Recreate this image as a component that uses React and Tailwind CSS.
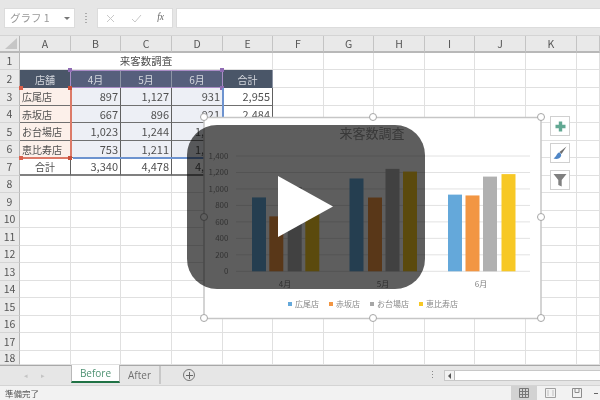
import React from "react";

const FONT = "font-['Noto_Sans_CJK_JP','Noto_Sans',sans-serif]";
const cols = ["A","B","C","D","E","F","G","H","I","J","K",""];
const rowNums = Array.from({ length: 18 }, (_, i) => i + 1);

const data = {
  3: ["広尾店", "897", "1,127", "931", "2,955"],
  4: ["赤坂店", "667", "896", "921", "2,484"],
  5: ["お台場店", "1,023", "1,244", "1,", ""],
  6: ["恵比寿店", "753", "1,211", "1,", ""],
  7: ["合計", "3,340", "4,478", "4,", ""],
};

function Cell({ row, col }) {
  if (row === 2 && col < 5) {
    const t = ["店舗", "4月", "5月", "6月", "合計"][col];
    const tint = col >= 1 && col <= 3;
    return (
      <div className={`flex items-center justify-center text-[10px] text-[#d5d8de] border-r border-[#8d95a5] ${tint ? "bg-[#565f7c]" : "bg-[#4a5668]"}`}>
        {t}
      </div>
    );
  }
  if (row >= 3 && row <= 7 && col < 5) {
    const t = data[row][col];
    const tint = row === 7 || col === 4 ? "bg-white" : col === 0 ? "bg-[#fcf0ea]" : "bg-[#edeff5]";
    let align = "justify-end pr-[2px]";
    if (col === 0) align = row === 7 ? "justify-center" : "justify-start pl-[2px]";
    if (col === 3 && row >= 5) align = "justify-start pl-[23px]";
    const size = col === 0 ? "text-[10px]" : "text-[11px]";
    const bottom = row === 7 ? "border-b-2 border-b-[#808080]" : "border-b border-b-[#707070]";
    return (
      <div className={`flex items-center ${size} text-[#505050] whitespace-nowrap border-r border-r-[#606060] ${bottom} ${tint} ${align}`}>
        {t}
      </div>
    );
  }
  return <div className="border-r border-b border-[#e0e0e0] bg-white" />;
}

function Handle({ className }) {
  return <div className={`absolute w-[8px] h-[8px] rounded-full border-[1.5px] border-[#a6a6a6] bg-white ${className}`} />;
}

function Square({ className, color }) {
  return <div className={`absolute w-[4px] h-[4px] ${color} ${className}`} />;
}

function Chart() {
  const grid = [0, 200, 400, 600, 800, 1000, 1200, 1400];
  const y = (v) => 271.3 - (v * 115.3) / 1400;
  const bars = [
    [252, 897, "#64a8da"], [269.3, 667, "#f29643"], [287.7, 1023, "#b0b0b0"], [305.3, 753, "#f7c825"],
    [349.5, 1127, "#64a8da"], [368, 896, "#f29643"], [385.5, 1244, "#b0b0b0"], [403, 1211, "#f7c825"],
    [448, 931, "#64a8da"], [465.5, 921, "#f29643"], [483, 1150, "#b0b0b0"], [501.5, 1180, "#f7c825"],
  ];
  const legend = [
    [288, "#64a8da", "広尾店"], [329, "#f29643", "赤坂店"], [370, "#a6a6a6", "お台場店"], [419, "#f7c825", "恵比寿店"],
  ];
  const font = "'Noto Sans CJK JP',sans-serif";
  return (
    <svg className="absolute left-0 top-0 pointer-events-none" width="600" height="400" viewBox="0 0 600 400">
      <rect x="204" y="117.5" width="337" height="201" fill="#fff" stroke="#c6c6c6" strokeWidth="1.5" />
      <text x="372" y="138" textAnchor="middle" fontSize="13" fill="#9a9a9a" fontFamily={font}>来客数調査</text>
      {grid.map((g) => (
        <g key={g}>
          <line x1="236" x2="530" y1={y(g)} y2={y(g)} stroke="#e2e2e2" strokeWidth="1" />
          <text x="228.5" y={y(g) + 2.8} textAnchor="end" fontSize="8" fill="#8a8a8a" fontFamily={font}>
            {g.toLocaleString("en-US")}
          </text>
        </g>
      ))}
      {bars.map(([x, v, c]) => (
        <rect key={x} x={x} y={y(v)} width="14" height={271.3 - y(v)} fill={c} />
      ))}
      {[[285, "4月"], [383, "5月"], [481, "6月"]].map(([x, t]) => (
        <text key={t} x={x} y="287" textAnchor="middle" fontSize="8" fill="#808080" fontFamily={font}>{t}</text>
      ))}
      {legend.map(([x, c, t]) => (
        <g key={t}>
          <rect x={x} y="302" width="4" height="4" fill={c} />
          <text x={x + 7} y="307" fontSize="8" fill="#8a8a8a" fontFamily={font}>{t}</text>
        </g>
      ))}
    </svg>
  );
}

export default function App() {
  return (
    <div className={`relative w-[600px] h-[400px] overflow-hidden flex flex-col bg-white blur-[0.35px] ${FONT}`}>
      {/* formula bar */}
      <div className="h-[36px] shrink-0 bg-[#e6e6e6] border-b border-[#d4d4d4] flex items-start pt-[8px] pl-[4px] gap-[3px]">
        <div className="w-[71px] h-[20px] bg-white border border-[#dcdcdc] flex items-center justify-between pl-[5px] pr-[4px] text-[10.5px] text-[#999999]">
          <span>グラフ 1</span>
          <span className="w-0 h-0 border-x-[3px] border-x-transparent border-t-[3px] border-t-[#777777]" />
        </div>
        <div className="w-[16px] h-[20px] flex flex-col items-center justify-center gap-[2px]">
          <span className="w-[2px] h-[1px] bg-[#aaaaaa]" />
          <span className="w-[2px] h-[1px] bg-[#aaaaaa]" />
          <span className="w-[2px] h-[1px] bg-[#aaaaaa]" />
          <span className="w-[2px] h-[1px] bg-[#aaaaaa]" />
        </div>
        <div className="w-[76px] h-[20px] bg-white border border-[#dcdcdc] flex items-center justify-between px-[8px]">
          <svg width="9" height="9" viewBox="0 0 9 9"><path d="M1 1l7 7M8 1L1 8" stroke="#c8c8c8" strokeWidth="1" fill="none" /></svg>
          <svg width="11" height="9" viewBox="0 0 11 9"><path d="M1 5l3 3 6-7" stroke="#c8c8c8" strokeWidth="1" fill="none" /></svg>
          <span className="font-['Liberation_Serif',serif] italic text-[9.5px] text-[#666666] leading-none">fx</span>
        </div>
        <div className="flex-1 h-[20px] bg-white border-y border-l border-[#dcdcdc]" />
      </div>

      {/* sheet */}
      <div className="relative h-[329px] shrink-0 overflow-hidden grid grid-cols-[20px_51px_50px_51px_51px_50px_51px_50px_51px_50px_51px_51px_23px] grid-rows-[17px_17px_18px_18px_17px_18px_17px_18px_17px_18px_17px_18px_17px_18px_17px_18px_17px_18px_14px]">
        <div className="relative bg-[#e9e9e9] border-r border-b-2 border-[#b8b8b8]">
          <div className="absolute right-[2px] bottom-[2px] w-0 h-0 border-l-[12px] border-l-transparent border-b-[11px] border-b-[#c6c6c6]" />
        </div>
        {cols.map((c, i) => (
          <div key={i} className="bg-[#e9e9e9] border-r border-b-2 border-r-[#c4c4c4] border-b-[#b8b8b8] flex items-center justify-center text-[10.5px] text-[#555555]">
            {c}
          </div>
        ))}
        {rowNums.map((r) => (
          <React.Fragment key={r}>
            <div className="bg-[#e9e9e9] border-r border-b border-r-[#b8b8b8] border-b-[#d4d4d4] flex items-center justify-center text-[10.5px] text-[#555555]">
              {r}
            </div>
            {r === 1 ? (
              <>
                <div className="col-span-5 border-r border-b border-[#e0e0e0] flex items-center justify-center text-[10.5px] text-[#505050] bg-white">
                  来客数調査
                </div>
                {[5, 6, 7, 8, 9, 10, 11].map((c) => <Cell key={c} row={1} col={c} />)}
              </>
            ) : (
              cols.map((c, i) => <Cell key={i} row={r} col={i} />)
            )}
          </React.Fragment>
        ))}
      </div>

      {/* sheet tabs */}
      <div className="h-[20px] shrink-0 bg-[#e6e6e6] border-t border-[#a8a8a8] flex items-start relative text-[10px]">
        <div className="w-[71px] h-[18px] flex items-center justify-center gap-[13px] text-[#c4c4c4] text-[7px] pr-[2px]">
          <span>◂</span><span>▸</span>
        </div>
        <div className="w-[49px] h-[18px] bg-white border-x border-[#b8b8b8] border-b-2 border-b-[#217346] flex items-center justify-center text-[#4f9273] font-['Open_Sans',sans-serif] font-medium -mt-[1px]">
          Before
        </div>
        <div className="w-[41px] h-[18px] flex items-center justify-center text-[#707070] font-['Open_Sans',sans-serif] font-medium border-r-2 border-[#c8c8c8]">
          After
        </div>
        <div className="ml-[22px] mt-[3px] w-[12px] h-[12px] rounded-full border border-[#777777] flex items-center justify-center">
          <svg width="7" height="7" viewBox="0 0 7 7"><path d="M3.5 0v7M0 3.5h7" stroke="#666" strokeWidth="1" /></svg>
        </div>
        <div className="absolute left-[432px] top-[5px] flex flex-col gap-[2px]">
          <span className="w-[1px] h-[1px] bg-[#888888]" />
          <span className="w-[1px] h-[1px] bg-[#888888]" />
          <span className="w-[1px] h-[1px] bg-[#888888]" />
        </div>
        <div className="absolute left-[444px] top-[4px] w-[156px] h-[11px] bg-white border-y border-l border-[#c8c8c8] flex items-center">
          <div className="w-[10px] h-full bg-[#f2f2f2] border-r border-[#b8b8b8] flex items-center justify-center">
            <span className="w-0 h-0 border-y-[3px] border-y-transparent border-r-[3px] border-r-[#555555]" />
          </div>
        </div>
      </div>

      {/* status bar */}
      <div className="flex-1 bg-[#f2f2f2] border-t border-[#d4d4d4] flex items-center pl-[5px] text-[8.5px] text-[#555555] relative">
        <span>準備完了</span>
        <div className="absolute left-[511px] top-0 h-full w-[26px] bg-[#d2d2d2] flex items-center justify-center">
          <svg width="10" height="10" viewBox="0 0 10 10"><path d="M.5.5h9v9h-9zM3.5.5v9M6.5.5v9M.5 3.5h9M.5 6.5h9" fill="none" stroke="#777" strokeWidth="1" /></svg>
        </div>
        <div className="absolute left-[545px] top-[2px]">
          <svg width="11" height="10" viewBox="0 0 11 10"><path d="M.5.5h10v9H.5z" fill="none" stroke="#a0a0a0" /><path d="M3 2v6M8 2v6" stroke="#c0c0c0" /></svg>
        </div>
        <div className="absolute left-[572px] top-[2px]">
          <svg width="10" height="10" viewBox="0 0 10 10"><path d="M.5.5h9v9h-9z" fill="none" stroke="#8c8c8c" /><path d="M3 .5v4h4v-4" fill="none" stroke="#8c8c8c" /></svg>
        </div>
        <div className="absolute left-[594px] top-[7px] w-[4px] h-[1px] bg-[#666666]" />
      </div>

      {/* selection ranges */}
      <div className="absolute left-[70px] top-[70px] w-[153px] h-[18px] border border-[#a98cc6]" />
      <Square color="bg-[#8f6bb3]" className="left-[68px] top-[68px]" />
      <Square color="bg-[#8f6bb3]" className="left-[220px] top-[68px]" />
      <Square color="bg-[#8f6bb3]" className="left-[220px] top-[86px]" />
      <div className="absolute left-[70px] top-[88px] w-[2px] h-[70px] bg-[#dc7a68]" />
      <div className="absolute left-[21px] top-[157px] w-[50px] h-[2px] bg-[#dc7a68]" />
      <div className="absolute left-[222px] top-[88px] w-[1.5px] h-[70px] bg-[#6d93cf]" />
      <div className="absolute left-[73px] top-[157px] w-[150px] h-[2px] bg-[#6d93cf]" />
      <Square color="bg-[#d9604c]" className="left-[19px] top-[86px]" />
      <Square color="bg-[#c94f3a]" className="left-[68px] top-[86px]" />
      <Square color="bg-[#d9604c]" className="left-[19px] top-[156px]" />
      <Square color="bg-[#c94f3a]" className="left-[68px] top-[156px]" />

      {/* chart */}
      <Chart />
      <Handle className="left-[200px] top-[113px]" />
      <Handle className="left-[369px] top-[113px]" />
      <Handle className="left-[537px] top-[113px]" />
      <Handle className="left-[200px] top-[213px]" />
      <Handle className="left-[537px] top-[213px]" />
      <Handle className="left-[200px] top-[314px]" />
      <Handle className="left-[369px] top-[314px]" />
      <Handle className="left-[537px] top-[314px]" />

      {/* chart buttons */}
      <div className="absolute left-[550px] top-[116px] flex flex-col gap-[7px]">
        <div className="w-[20px] h-[20px] bg-white border border-[#d0d0d0] flex items-center justify-center">
          <svg width="11" height="11" viewBox="0 0 11 11"><path d="M5.5 0.5v10M0.5 5.5h10" stroke="#62a893" strokeWidth="3.4" /></svg>
        </div>
        <div className="w-[20px] h-[20px] bg-white border border-[#d0d0d0] flex items-center justify-center">
          <svg width="14" height="14" viewBox="0 0 14 14">
            <path d="M13.5 0.5L6.5 6 8.5 8z" fill="#6f6f6f" />
            <path d="M6.5 6.5C4.5 6.5 4 8.5 3 10 2.5 11 1.5 11.8 0.5 12.5c3 .8 6.5.5 7.6-2.5.4-1.3-.4-3-1.6-3.5z" fill="#4f86c6" />
          </svg>
        </div>
        <div className="w-[20px] h-[20px] bg-white border border-[#d0d0d0] flex items-center justify-center">
          <svg width="14" height="14" viewBox="0 0 14 14"><path d="M0.5 1h13L8.7 7v6.5L5.3 12V7z" fill="#808080" /></svg>
        </div>
      </div>

      {/* video overlay */}
      <div className="absolute left-[187px] top-[125px] w-[238px] h-[164px] rounded-[30px] bg-[#000000a1] flex items-center justify-center">
        <svg width="56" height="62" viewBox="0 0 56 62" className="ml-[-1px]">
          <path d="M0 0L55 30.5 0 61z" fill="#fff" />
        </svg>
      </div>
    </div>
  );
}
